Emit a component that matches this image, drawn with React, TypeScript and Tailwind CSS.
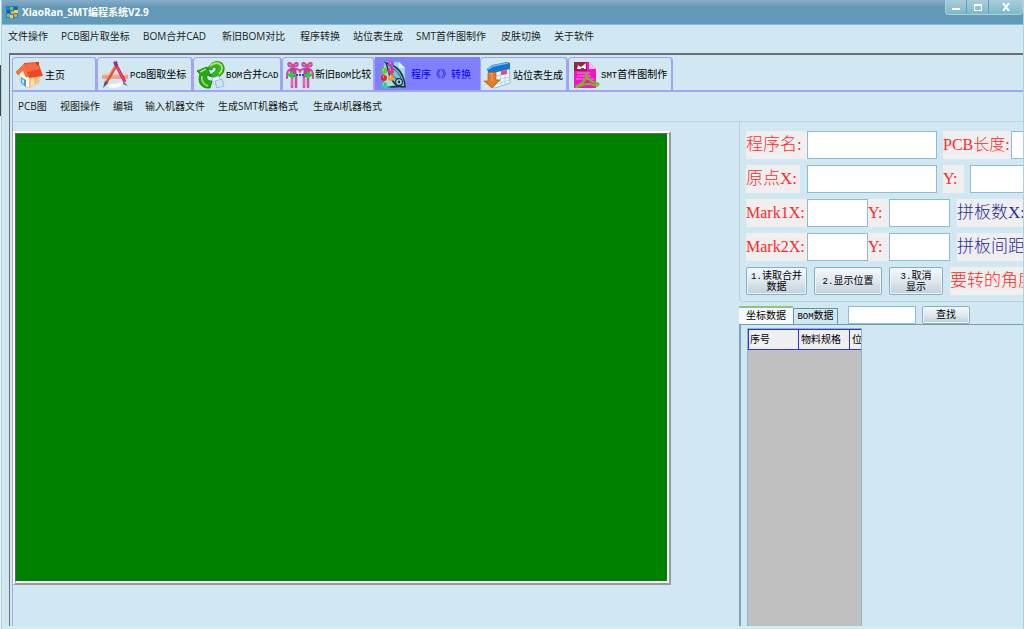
import type { ReactNode } from 'react';

const HomeIcon = () => (
    <svg viewBox="0 0 28 28" className="w-7 h-7 shrink-0">
        <path d="M4 12v9l8 6 11-6V12L9 6z" fill="#fff6ea" stroke="#eeb27c" strokeWidth=".7" />
        <path d="M13 16l10-3v9l-10 5z" fill="#f7c27c" />
        <path d="M15 18l3-1v7l-3 1z" fill="#fbe7bd" />
        <path d="M0 11L9 2l4 13-3 1-3-7-5 5z" fill="#f9743a" stroke="#e2450f" strokeWidth=".5" />
        <path d="M8 2l14-1 5 14-14 2z" fill="#ee4722" />
        <path d="M9 3l12-1 3 6-13 3z" fill="#ff7a50" opacity=".7" />
        <path d="M20 1h3v4l-3-2z" fill="#c6401a" />
        <path d="M5 16l5 3v7l-5-4z" fill="#3d9fdc" />
        <path d="M6 18l2 1v4l-2-1z" fill="#b6e6fa" />
    </svg>
);

const CompassIcon = () => (
    <svg viewBox="0 0 28 28" className="w-7 h-7 shrink-0">
        <path d="M7 25c4-4 9-1 13-4 2 3-2 6-6 6-3 0-6 0-7-2z" fill="#f6fafc" />
        <path d="M1 12l26 1v5H1z" fill="#f0a294" />
        <path d="M1 12l26 1v1H1z" fill="#f8cdc4" />
        <path d="M5 15v2M9 15v2M20 15v2M24 15v2" stroke="#cf7767" strokeWidth=".7" />
        <path d="M14 2l10 19" stroke="#d3205a" strokeWidth="3" />
        <path d="M16 6l8 15" stroke="#f2708f" strokeWidth=".8" />
        <path d="M23 21l4 4-5-2z" fill="#55606b" />
        <path d="M16 3L5 22" stroke="#e4502a" strokeWidth="3" />
        <path d="M14 5L4 21" stroke="#f9a268" strokeWidth=".8" />
        <path d="M4 20l3 2-5 5z" fill="#3e5688" />
        <path d="M12 1l4-1 1 5-2 1z" fill="#8a2f8f" />
    </svg>
);

const RecycleIcon = () => (
    <svg viewBox="0 0 28 28" className="w-7 h-7 shrink-0">
        <path d="M11 8C13 1 20-1 25 2c3 4 3 9-1 12l-3 3-9-2 4-3c3-2 4-4 2-6-2 0-3 1-3 3z" fill="#35b51c" stroke="#1c7c10" strokeWidth=".8" />
        <path d="M13 5c3-3 8-4 11-1 2 3 1 6-2 9" stroke="#a4ef6a" strokeWidth="1.8" fill="none" />
        <path d="M0 10l10-4 4 9-4-1c-1 4 1 6 5 6l-2 7C5 28 0 22 3 13z" fill="#27a81a" stroke="#147011" strokeWidth=".8" />
        <path d="M3 11l6-3M5 15c-1 5 1 8 6 10" stroke="#92e75d" strokeWidth="1.8" fill="none" />
        <path d="M15 17l7-2 2 7-7 2z" fill="#eef5ff" stroke="#8db4e0" strokeWidth=".7" />
        <path d="M18 20l7-2 2 7-7 2z" fill="#cfe2fa" stroke="#7ea7da" strokeWidth=".7" />
    </svg>
);

const CompareIcon = () => (
    <svg viewBox="0 0 28 28" className="w-7 h-7 shrink-0">
        <g fill="none" stroke="#c94a9f" strokeWidth="2.2" strokeLinecap="round" strokeLinejoin="round">
            <path d="M7 5C4 0 1 2 3 5l4 1 4-1c2-3-1-5-4 0M21 5c-3-5-6-3-4 0l4 1 4-1c2-3-1-5-4 0" />
            <path d="M5 8c-4 1-4 5-4 9M23 8c4 1 4 5 4 9" />
            <path d="M9 8c3 0 5 1 5 3 0-2 2-3 5-3" />
        </g>
        <path d="M4 7h6l1 9H4zM18 7h6v9h-7z" fill="#c23d97" />
        <path d="M6 16v10M10 16v10M18 16v10M22 16v10" stroke="#cf4fa6" strokeWidth="2.6" strokeLinecap="round" />
        <path d="M6 17v8M18 17v8" stroke="#ef93cf" strokeWidth=".8" />
        <path d="M1 14l6-4v3h3v2H7v3zM27 14l-6-4v3h-3v2h3v3z" fill="#1fd33a" />
        <path d="M10 14h8" stroke="#264bbb" strokeWidth="2" strokeDasharray="2 1" />
    </svg>
);

const ConvertIcon = () => (
    <svg viewBox="0 0 28 28" className="w-7 h-7 shrink-0">
        <path d="M4 1h15l6 6v20H4z" fill="#9fdcf0" stroke="#69b5d2" strokeWidth=".7" />
        <path d="M19 1v6h6" fill="#dff5fb" />
        <path d="M6 2c7 1 14 6 17 14 2 5 2 8 2 10-6 0-10-2-13-7C8 13 8 7 6 2z" fill="#7dbfd6" stroke="#1a3146" strokeWidth="1.5" />
        <path d="M6 2l-2-1M9 5c6 3 10 7 12 12M10 9c2 5 4 8 8 9" fill="none" stroke="#28506a" />
        <path d="M5 26c5 1 12 1 20 0l-6-2z" fill="#17334a" />
        <circle cx="19" cy="21" r="3.4" fill="#bfe4ef" stroke="#17334a" strokeWidth="1.2" />
        <circle cx="19" cy="21" r="1.4" fill="#17334a" />
        <circle cx="11" cy="3" r="3" fill="#bd45cf" />
        <circle cx="4" cy="10" r="3" fill="#63cf18" />
        <circle cx="11" cy="10" r="3" fill="#ef2c8c" />
        <circle cx="4" cy="17" r="3" fill="#ee2020" />
        <circle cx="11" cy="17" r="3" fill="#f79a1d" />
        <circle cx="4" cy="24" r="3" fill="#30cf8a" />
        <path d="M10 2h1M3 9h1M10 9h1M3 16h1M10 16h1M3 23h1" stroke="#fff" />
    </svg>
);

const StationIcon = () => (
    <svg viewBox="0 0 28 28" className="w-7 h-7 shrink-0">
        <path d="M5 7l20-5 1 20-15 5-6-3z" fill="#eef7fe" stroke="#7bacd6" strokeWidth=".8" />
        <path d="M3 8l5-4 15-3 3 1v6L5 13z" fill="#1675cf" />
        <path d="M4 8l5-3 15-3" stroke="#72bdf3" strokeWidth="1.5" fill="none" />
        <path d="M12 15l13-3M13 19l12-3M13 23l12-4M16 12l1 12M21 11v12" stroke="#aacbe6" strokeWidth=".8" />
        <path d="M17 10l6-1v4l-6 1z" fill="#e4477d" />
        <path d="M4 12l8-1v8h4l-8 8-8-7h4z" fill="#e27b27" stroke="#b75411" strokeWidth=".7" />
        <path d="M5 13l3-1v8" stroke="#f6ab64" fill="none" />
    </svg>
);

const FirstArticleIcon = () => (
    <svg viewBox="0 0 28 28" className="w-7 h-7 shrink-0">
        <path d="M2 1h15l7 7v19H2z" fill="#ee17c5" />
        <path d="M17 1v7h7" fill="#ffc1f1" />
        <path d="M2 1h13v9H2z" fill="#b5123f" />
        <path d="M6 4l3 2 5-4v6H5z" fill="#f8f3f3" />
        <path d="M3 2h3v2H3zM9 7h3v2H9z" fill="#187447" />
        <path d="M5 12h13M5 15h14M4 18h18" stroke="#ff7ce5" />
        <path d="M14 12c1 5 5 9 11 10 3 1 1 4-3 2-5-2-10-1-15 1-4 3-4 0 0-1 5-2 8-7 7-12z" fill="none" stroke="#77b81b" strokeWidth="2" />
    </svg>
);

const menuItems = [
    { label: '文件操作', width: 'w-[53px]' },
    { label: 'PCB图片取坐标', width: 'w-[82px]' },
    { label: 'BOM合并CAD', width: 'w-[79px]' },
    { label: '新旧BOM对比', width: 'w-[78px]' },
    { label: '程序转换', width: 'w-[53px]' },
    { label: '站位表生成', width: 'w-[63px]' },
    { label: 'SMT首件图制作', width: 'w-[85px]' },
    { label: '皮肤切换', width: 'w-[53px]' },
    { label: '关于软件', width: 'w-[53px]' },
];

const subMenuItems = [
    { label: 'PCB图', width: 'w-[42px]' },
    { label: '视图操作', width: 'w-[53px]' },
    { label: '编辑', width: 'w-[32px]' },
    { label: '输入机器文件', width: 'w-[73px]' },
    { label: '生成SMT机器格式', width: 'w-[95px]' },
    { label: '生成AI机器格式', width: 'w-[85px]' },
];

const tools = [
    { label: '主页', icon: <HomeIcon />, width: 'w-[85px]' },
    { label: 'PCB图取坐标', icon: <CompassIcon />, width: 'w-[96px]' },
    { label: 'BOM合并CAD', icon: <RecycleIcon />, width: 'w-[89px]' },
    { label: '新旧BOM比较', icon: <CompareIcon />, width: 'w-[93px]' },
    { label: '程序《》转换', icon: <ConvertIcon />, width: 'w-[105px]', active: true },
    { label: '站位表生成', icon: <StationIcon />, width: 'w-[88px]' },
    { label: 'SMT首件图制作', icon: <FirstArticleIcon />, width: 'w-[105px]' },
];

const inputClass = 'h-7 shrink-0 bg-white border border-[#8dbdd2] px-1 text-sm outline-none';
const buttonClass =
    'shrink-0 rounded-[2px] border border-[#86afc4] bg-gradient-to-b from-[#f4f8fa] via-[#dfe8ee] to-[#bfd0db] shadow-[inset_0_0_0_1px_#eef6fa] text-[10px] leading-[10px] text-black';

// Latin letters take a narrow fixed width next to the Chinese ones
function MixedText({ text }: { text: string }) {
    return (
        <span>
            {text.split(/([A-Z0-9.]+)/).map((part, i) =>
                i % 2 ? (
                    <span key={i} className="text-[9px] font-['Liberation_Mono',monospace]">{part}</span>
                ) : (
                    part
                )
            )}
        </span>
    );
}

function FieldLabel({ htmlFor, className, children }: { htmlFor: string; className: string; children: ReactNode }) {
    return (
        <label
            htmlFor={htmlFor}
            className={`h-7 shrink-0 bg-[#efefef] leading-7 whitespace-nowrap font-['Liberation_Serif','Noto_Sans_CJK_SC',serif] font-light ${className}`}
        >
            {children}
        </label>
    );
}

function MenuBar({ items, className }: { items: { label: string; width: string }[]; className: string }) {
    return (
        <nav className={`flex items-center shrink-0 text-[10px] leading-4 text-[#1c1c1c] font-['Open_Sans','Noto_Sans_CJK_SC',sans-serif] ${className}`}>
            {items.map((item) => (
                <button key={item.label} type="button" className={`${item.width} shrink-0 text-left whitespace-nowrap`}>
                    {item.label}
                </button>
            ))}
        </nav>
    );
}

function TitleBar() {
    return (
        <header className="flex items-start justify-between h-6 shrink-0 bg-gradient-to-b from-[#86adc9] via-[#6399b8] via-30% to-[#6199b8]">
            <div className="flex items-center gap-1 h-6 pl-1">
                <svg viewBox="0 0 12 12" className="w-3 h-3">
                    <path d="M0 0h12v12H0z" fill="#1c7fd6" />
                    <path d="M4 1h3v3H4zM1 8h3v3H1z" fill="#6ed03c" />
                    <path d="M8 1h3v3H8zM1 4h3v3H1z" fill="#1f58bb" />
                    <path d="M5 5h3v3H5zM8 8h3v3H8z" fill="#f5a623" />
                    <path d="M8 4h4v3H8zM4 9h3v3H4z" fill="#ffc94a" />
                </svg>
                <h1 className="text-[10px] leading-6 font-bold text-white font-['Open_Sans','Noto_Sans_CJK_SC',sans-serif]">
                    XiaoRan_SMT编程系统V2.9
                </h1>
            </div>
            <div className="flex h-[15px] rounded-b-sm border border-t-0 border-[#a5d3dc] bg-gradient-to-b from-[#a9cddc] to-[#7cb9c6] divide-x divide-[#5f9fb2]">
                <button type="button" aria-label="最小化" className="flex items-end justify-center w-[21px] pb-1">
                    <span className="w-2 h-0.5 bg-white" />
                </button>
                <button type="button" aria-label="最大化" className="flex items-center justify-center w-[22px]">
                    <span className="w-2 h-[7px] border border-t-2 border-white" />
                </button>
                <button type="button" aria-label="关闭" className="flex items-center justify-center w-[33px]">
                    <svg viewBox="0 0 8 8" className="w-2 h-2">
                        <path d="M1 0l6 8M7 0L1 8" stroke="#fff" strokeWidth="2" />
                    </svg>
                </button>
            </div>
        </header>
    );
}

function ProgramForm() {
    return (
        <form className="flex flex-col gap-1.5 shrink-0 h-[180px] pt-[9px] pl-1.5 rounded-bl-sm border-l border-b border-[#b9cfdc] overflow-hidden">
            <div className="flex">
                <FieldLabel htmlFor="name" className="w-[61px] text-[17px] text-[#ff2828]">程序名:</FieldLabel>
                <input id="name" className={`${inputClass} w-[130px]`} />
                <FieldLabel htmlFor="length" className="w-[68px] ml-1.5 text-[16px] text-[#ff2828]">PCB长度:</FieldLabel>
                <input id="length" className={`${inputClass} w-[61px]`} />
            </div>
            <div className="flex">
                <FieldLabel htmlFor="originX" className="w-[54px] mr-[7px] text-[17px] text-[#ff2828]">原点X:</FieldLabel>
                <input id="originX" className={`${inputClass} w-[130px]`} />
                <FieldLabel htmlFor="originY" className="w-[21px] ml-1.5 mr-1.5 text-[16px] text-[#ff2828]">Y:</FieldLabel>
                <input id="originY" className={`${inputClass} w-[61px]`} />
            </div>
            {['1', '2'].map((n) => (
                <div key={n} className="flex">
                    <FieldLabel htmlFor={`mark${n}x`} className="w-[61px] text-[16px] text-[#ff2828]">Mark{n}X:</FieldLabel>
                    <input id={`mark${n}x`} className={`${inputClass} w-[61px]`} />
                    <FieldLabel htmlFor={`mark${n}y`} className="w-[21px] text-[16px] text-[#ff2828]">Y:</FieldLabel>
                    <input id={`mark${n}y`} className={`${inputClass} w-[61px]`} />
                    <FieldLabel htmlFor={`panel${n}`} className="w-[90px] ml-[7px] text-[17px] text-[#28289c]">
                        {n === '1' ? '拼板数X:' : '拼板间距'}
                    </FieldLabel>
                    <input id={`panel${n}`} className={`${inputClass} w-[61px]`} />
                </div>
            ))}
            <div className="flex gap-[7px]">
                <button type="button" className={`${buttonClass} w-[61px] h-7`}><MixedText text="1.读取合并" /><br />数据</button>
                <button type="button" className={`${buttonClass} w-[68px] h-7`}><MixedText text="2.显示位置" /></button>
                <button type="button" className={`${buttonClass} w-[54px] h-7`}><MixedText text="3.取消" /><br />显示</button>
                <FieldLabel htmlFor="angle" className="w-[106px] text-[17px] text-[#ff2828]">要转的角度</FieldLabel>
                <input id="angle" className={`${inputClass} w-[61px]`} />
            </div>
        </form>
    );
}

function DataPanel() {
    return (
        <section className="flex flex-col flex-1 min-h-0 pt-[5px]">
            <div className="flex items-end shrink-0 h-[18px] border-b border-[#6fa0a8]">
                <button type="button" className="w-[54px] h-[18px] shrink-0 bg-[#f8fbfd] border-t-2 border-[#8cc480] text-[10px] leading-4 whitespace-nowrap">
                    坐标数据
                </button>
                <button type="button" className="w-[45px] h-4 shrink-0 border border-b-0 border-[#5f98a4] text-[10px] leading-[14px] whitespace-nowrap">
                    <MixedText text="BOM数据" />
                </button>
                <input aria-label="查找内容" className="w-[68px] h-[18px] ml-2.5 shrink-0 bg-white border border-[#8dbdd2] px-1 text-[10px] outline-none" />
                <button type="button" className={`${buttonClass} w-12 h-[18px] ml-1.5`}>查找</button>
            </div>
            <div className="flex-1 min-h-0 pt-[3px] pl-1.5 border-l-2 border-[#7fa5ae]">
                <div className="w-[115px] h-full overflow-hidden bg-[#c0c0c0] border-x border-t border-[#8ab6cc]">
                    <table className="w-[164px] table-fixed border-collapse bg-[#efefef] text-[10px] leading-4 text-left">
                        <thead>
                            <tr className="h-5">
                                <th className="w-[50px] border border-[#3030f0] pl-px font-normal">序号</th>
                                <th className="w-[51px] border border-[#3030f0] pl-0.5 font-normal whitespace-nowrap">物料规格</th>
                                <th className="border border-[#3030f0] pl-0.5 font-normal">位号</th>
                            </tr>
                        </thead>
                    </table>
                </div>
            </div>
        </section>
    );
}

export default function App() {
    return (
        <div className="flex h-screen overflow-hidden bg-[#d1e8f2] text-black font-['Liberation_Serif','Noto_Sans_CJK_SC',serif]">
            {/* Strip of the window behind */}
            <div className="w-px shrink-0 bg-[#eef2f4]">
                <div className="mt-[65px] h-[51px] bg-[#41484e]" />
            </div>
            <div className="flex flex-col flex-1 min-w-0 border-x border-[#a8d3df]">
                <TitleBar />
                <MenuBar items={menuItems} className="h-[29px] pl-1.5 pb-1.5 border-t border-[#7fc1cf]" />

                <div className="flex flex-col flex-1 min-h-0 ml-[7px] pt-0.5 pl-0.5 border-t-2 border-l border-[#6c7072]">
                    {/* Toolbar */}
                    <div className="flex items-end shrink-0 h-[35px] border-b-2 border-[#a3a3f4]">
                        {tools.map((tool) => (
                            <button
                                key={tool.label}
                                type="button"
                                className={`flex items-center shrink-0 h-[33px] pt-0.5 text-[10px] whitespace-nowrap ${tool.width} ${
                                    tool.active
                                        ? 'bg-[#8080ff] border border-[#8080ff] text-[#0000f0] pl-1 gap-[3px]'
                                        : 'rounded-t-sm border border-r-2 border-b-0 border-[#a3a3f4] pl-[3px] gap-px'
                                }`}
                            >
                                {tool.icon}
                                <MixedText text={tool.label} />
                            </button>
                        ))}
                    </div>

                    <div className="flex flex-col flex-1 min-h-0 border-l border-[#a3a3f4]">
                        <MenuBar items={subMenuItems} className="h-[30px] pl-[5px] pb-px border-b border-[#c0d4de]" />
                        <div className="flex flex-1 min-h-0">
                            <main className="flex-1 min-w-0 pt-[9px] pb-[41px] pr-[68px]">
                                <div className="h-full border-2 border-t-white border-l-white border-r-[#999] border-b-[#999]">
                                    <div className="h-full bg-[#008000] border-t border-l border-t-[#666] border-l-[#666] border-r-2 border-b-2 border-r-white border-b-white" />
                                </div>
                            </main>
                            <aside className="flex flex-col w-[284px] shrink-0 overflow-hidden">
                                <ProgramForm />
                                <DataPanel />
                            </aside>
                        </div>
                    </div>
                </div>
                <div className="h-[3px] shrink-0 bg-[#c6f1f5]" />
            </div>
        </div>
    );
}
